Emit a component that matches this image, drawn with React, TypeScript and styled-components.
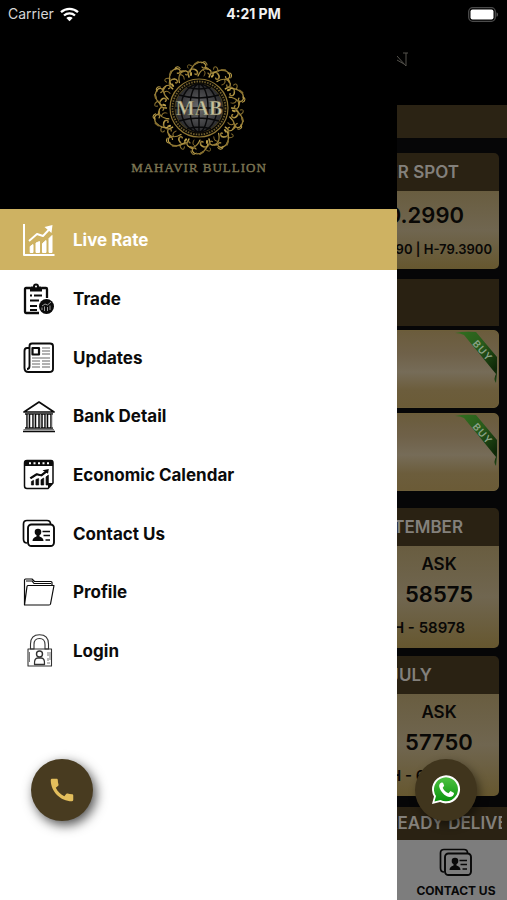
import React from "react";
import styled, { createGlobalStyle, css } from "styled-components";
import { MdCall } from "react-icons/md";

const GlobalStyle = createGlobalStyle`
  *, *::before, *::after { box-sizing: border-box; }
  body { margin: 0; background: #000; font-family: Inter, "Liberation Sans", sans-serif; }
  h1, h2, p, ul { margin: 0; padding: 0; }
  button { font: inherit; border: 0; padding: 0; cursor: pointer; }
  a { color: inherit; text-decoration: none; }
`;

const Screen = styled.div`
  position: relative;
  display: grid;
  grid-template-columns: minmax(0, 1fr) 110px;
  grid-template-rows: 28px 1fr;
  min-height: 100vh;
  background: #000;
`;

/* ---------- status bar ---------- */

const StatusBar = styled.header`
  grid-column: 1 / -1;
  display: grid;
  grid-template-columns: 1fr auto 1fr;
  align-items: center;
  padding: 0 8px;
  color: #f2f2f2;
  font-size: 14px;
  line-height: 28px;
`;

const Carrier = styled.span`
  display: flex;
  align-items: center;
  gap: 6px;
  color: #d6d6d6;
`;

const Clock = styled.time`
  font-weight: 700;
`;

const BatterySlot = styled.span`
  display: flex;
  justify-content: flex-end;
`;

/* ---------- drawer ---------- */

const Drawer = styled.aside`
  display: flex;
  flex-direction: column;
  background: #fff;
`;

const Brand = styled.div`
  display: flex;
  justify-content: center;
  height: 181px;
  padding-top: 30px;
  background: #000;
`;

const Menu = styled.ul`
  display: grid;
  grid-template-rows: 61px;
  grid-auto-rows: 1fr;
  min-height: 471px;
  list-style: none;
`;

const MenuLink = styled.a<{ $active?: boolean }>`
  display: flex;
  align-items: center;
  gap: 18px;
  height: 100%;
  padding-left: 22px;
  color: #0b0b0b;
  font-size: 17px;
  font-weight: 700;
  ${(p) =>
    p.$active &&
    css`
      background: #ceb262;
      color: #fff;
    `}
`;

const FloatingButton = styled.button<{ $side: "left" | "right" }>`
  position: absolute;
  bottom: 79px;
  ${(p) => (p.$side === "left" ? "left: 31px;" : "right: 30px;")}
  display: flex;
  align-items: center;
  justify-content: center;
  width: 62px;
  height: 62px;
  border-radius: 50%;
  ${(p) =>
    p.$side === "left"
      ? css`
          background: #483b20;
          color: #e3be5c;
          box-shadow: 3px 4px 12px rgba(0, 0, 0, 0.7);
        `
      : css`
          background: #40351d;
          color: #fff;
          box-shadow: 3px 4px 10px rgba(0, 0, 0, 0.45);
        `}
`;

/* ---------- dimmed rates page ---------- */

const Rates = styled.main`
  display: flex;
  flex-direction: column;
  align-items: flex-end;
  min-width: 0;
  overflow: hidden;
  background: #060607;
`;

const TitleBar = styled.div`
  align-self: stretch;
  height: 77px;
  padding-top: 21px;
  background: #000;
`;

const NewsStrip = styled.div`
  align-self: stretch;
  height: 33px;
  margin-bottom: 15px;
  background: #2b2314;
`;

const SectionBar = styled.div`
  align-self: stretch;
  height: 47px;
  margin: 10px 8px 4px 0;
  background: #292112;
`;

const Card = styled.section<{ $gap: number }>`
  width: 186px;
  margin: 0 8px ${(p) => p.$gap}px 0;
  border-radius: 5px;
  overflow: hidden;
  color: #090806;
`;

const CardTitle = styled.h2<{ $inset: number }>`
  padding-right: ${(p) => p.$inset}px;
  text-align: right;
  background: #2a2213;
  color: #83807b;
  font-size: 17px;
  font-weight: 600;
  line-height: 38px;
  white-space: nowrap;
`;

const SpotBody = styled.div`
  height: 78px;
  padding-top: 8px;
  background: linear-gradient(#695d40, #706650 50%, #66572f);
  text-align: right;
`;

const SpotPrice = styled.p`
  padding-right: 35px;
  font-size: 22px;
  font-weight: 600;
  line-height: 32px;
`;

const SpotRange = styled.p`
  padding: 8px 7px 0 0;
  font-size: 13px;
  font-weight: 600;
  line-height: 20px;
  white-space: nowrap;
`;

const RateBody = styled.div`
  display: flex;
  flex-direction: column;
  align-items: center;
  height: 102px;
  padding: 6px 0 0 66px;
  background: linear-gradient(#695d40, #706650 50%, #66572f);
`;

const RateLabel = styled.p`
  font-size: 17px;
  font-weight: 600;
  line-height: 24px;
`;

const RateValue = styled.p`
  font-size: 22px;
  font-weight: 600;
  line-height: 36px;
`;

const RateHigh = styled.p`
  align-self: flex-end;
  padding-right: 34px;
  font-size: 15px;
  font-weight: 600;
  line-height: 32px;
`;

const OfferCard = styled.section<{ $gap: number }>`
  display: flex;
  justify-content: flex-end;
  width: 186px;
  height: 78px;
  margin: 0 8px ${(p) => p.$gap}px 0;
  border: 1px solid #6d5e39;
  border-radius: 5px;
  overflow: hidden;
  background: linear-gradient(#6b5c3c, #6f6149 30%, #766c58 54%, #6c5d3c 78%, #6b5b37);
`;

const DeliveryStrip = styled.div`
  align-self: stretch;
  height: 33px;
  padding-right: 5px;
  background: #2a2213;
`;

const DeliveryText = styled.p`
  display: flex;
  justify-content: center;
  padding-left: 18px;
  overflow: hidden;
  color: #83807b;
  font-size: 17px;
  font-weight: 600;
  line-height: 33px;
  white-space: nowrap;
`;

const TabBar = styled.nav`
  align-self: stretch;
  flex: 1;
  display: flex;
  justify-content: center;
  background: #7d7d7d;
`;

const Tab = styled.a`
  display: flex;
  flex-direction: column;
  align-items: center;
  gap: 3px;
  padding: 6px 0 0 8px;
  color: #080808;
  font-size: 12px;
  font-weight: 700;
  line-height: 18px;
`;

/* ---------- drawings ---------- */

const WifiIcon = () => (
  <svg width="19" height="15" viewBox="0 0 19 15" fill="none" stroke="#fff" strokeWidth="2.3" aria-hidden>
    <path d="M1 5.2C5.8.7 13.2.7 18 5.2" />
    <path d="M4 8.5C7.2 5.6 11.8 5.6 15 8.5" />
    <path d="M9.5 14.3 6.3 11C8.2 9.4 10.8 9.4 12.7 11Z" fill="#fff" stroke="none" />
  </svg>
);

const BatteryIcon = () => (
  <svg width="31" height="15" viewBox="0 0 31 15" aria-hidden>
    <rect x="0.7" y="0.7" width="26.6" height="13.6" rx="4" fill="none" stroke="#4b4b4b" strokeWidth="1.3" />
    <rect x="2.5" y="2.5" width="23" height="10" rx="2" fill="#fff" />
    <path d="M28.5 5.2c2 .8 2 3.8 0 4.6z" fill="#555" />
  </svg>
);

const Flourish = () => (
  <g fill="none" stroke="url(#gold)" strokeLinecap="round">
    <path strokeWidth="1.5" d="M-10-31C-12-37-8-41-3-38C0-36-2-32-4-34" />
    <path strokeWidth="1.3" d="M-9-36C-7-43-1-48 5-45C9-42 5-38 3-41" />
    <path strokeWidth="1.2" d="M-1-32C2-39 7-41 11-38C14-35 10-32 9-35" />
    <path strokeWidth="1" d="M-6-41C-10-45-13-43-11-40M3-45C5-48 8-46 8-43M5-32C7-35 6-37 4-38" />
    <path strokeWidth="2" d="M-4-44L-1-46M7-40L9-39M-8-33L-8-35" />
  </g>
);

const BrandLogo = () => (
  <svg width="146" height="122" viewBox="0 0 146 122" role="img" aria-label="Mahavir Bullion">
    <defs>
      <linearGradient id="gold" x1="0" y1="0" x2="1" y2="1">
        <stop offset="0" stopColor="#5b481a" />
        <stop offset="0.5" stopColor="#c2a54c" />
        <stop offset="1" stopColor="#725720" />
      </linearGradient>
      <radialGradient id="globe">
        <stop offset="0" stopColor="#6b6b6e" />
        <stop offset="1" stopColor="#2b2b2d" />
      </radialGradient>
    </defs>
    <g transform="translate(73 50)">
      {Array.from({ length: 10 }, (_, i) => (
        <g key={i} transform={`rotate(${i * 36})`}>
          <Flourish />
        </g>
      ))}
      <circle r="29" fill="#080704" stroke="#8f7633" strokeWidth="1.2" />
      <circle r="26.5" fill="none" stroke="#6f5d2c" strokeWidth="1.8" strokeDasharray="1.5 1.2" />
      <circle r="24" fill="url(#globe)" stroke="#4d421f" />
      <g fill="none" stroke="#09090a" strokeWidth="1.4">
        <path d="M0-24V24M-24 0H24M-20-13Q0-7 20-13M-20 13Q0 7 20 13M-12-21Q0-17 12-21M-12 21Q0 17 12 21" />
        <ellipse rx="9" ry="24" />
        <ellipse rx="18" ry="24" />
      </g>
      <text y="7" textAnchor="middle" fontFamily="Liberation Serif, serif" fontWeight="700" fontSize="20" fill="#c6c09c" stroke="#474635" strokeWidth="0.4">
        MAB
      </text>
    </g>
    <text x="73" y="114" textAnchor="middle" fontFamily="Liberation Serif, serif" fontSize="13" letterSpacing="1" fill="#7d7653" stroke="#7d7653" strokeWidth="0.4">
      MAHAVIR BULLION
    </text>
  </svg>
);

const IconFrame = ({ children }: { children: React.ReactNode }) => (
  <svg width="33" height="33" viewBox="0 0 33 33" fill="none" stroke="currentColor" strokeWidth="1.5" strokeLinejoin="round" aria-hidden>
    {children}
  </svg>
);

const ChartMarks = () => (
  <>
    <path d="M8.2 31V25L11 23V31ZM14 31V21.5L17.5 20V31ZM20.5 31V22L24 19V31ZM27 31V17L30 14V31Z" fill="currentColor" strokeWidth="1" />
    <path d="M7 19.5L15 12.5L21 14.5L28 7" strokeWidth="1.9" />
    <path d="M22.5 5.5L30.5 3.5L29.5 11.5Z" fill="currentColor" stroke="none" />
  </>
);

const LiveRateIcon = () => (
  <IconFrame>
    <path d="M2 1V32H32.5" strokeWidth="2" />
    <g transform="translate(0 -1.5)">
      <ChartMarks />
    </g>
  </IconFrame>
);

const TradeIcon = () => (
  <IconFrame>
    <path d="M8 5H4Q3 5 3 6V29Q3 30 4 30H17M20 5H24Q25 5 25 6V15" strokeWidth="2.3" />
    <path d="M8 8.5V4.5Q8 3.5 9.5 3.5H11Q11 .5 14 .5T17 3.5H18.5Q20 3.5 20 4.5V8.5Z" fill="currentColor" stroke="none" />
    <circle cx="14" cy="3.5" r="1" fill="#fff" stroke="none" />
    <path d="M8 12.5H10M12 12.5H20M8 17.5H17M8 23H15M8 27H15" strokeWidth="1.9" />
    <circle cx="24.5" cy="23.5" r="7.5" fill="currentColor" stroke="none" />
    <path d="M20 27V24.5M22.5 28V23.5M25.5 28V24M28 27V22.5M20 23L23 21L25.5 22L29 19" stroke="#aaa" strokeWidth="0.9" />
  </IconFrame>
);

const NewsIcon = () => (
  <IconFrame>
    <path d="M7.5 7H5Q2.5 7 2.5 10V27Q2.5 31 6.5 31H27Q31 31 31 28V5Q31 2.5 28 2.5H10Q7.5 2.5 7.5 5V25Q7.5 28 5 28" strokeWidth="1.9" />
    <rect x="10.5" y="7" width="6.5" height="6.5" strokeWidth="2.2" />
    <path d="M20 7H28M20 10H28M20 13H28M10 17H28M10 20H18M20 20H28M10 23H18M20 23H28M10 26H18M20 26H28" strokeWidth="1.2" stroke="#666" />
  </IconFrame>
);

const BankIcon = () => (
  <IconFrame>
    <path d="M2 12L17 2L32 12ZM3 14H31M3 28H31M1 31.5H33" strokeWidth="1.7" />
    <path d="M1.5 29.7H32" stroke="#777" />
    <path d="M5 14V28M7.5 14V28M11 14V28M13.5 14V28M17 14V28M20 14V28M23 14V28M25.5 14V28M29 14V28" strokeWidth="1.5" />
    <path d="M6.2 14V28M12.2 14V28M18.5 14V28M24.2 14V28M30 14V28" stroke="#999" strokeWidth="0.8" />
  </IconFrame>
);

const CalendarIcon = () => (
  <IconFrame>
    <path d="M5 2.5H29Q31 2.5 31 5V25L26 30.5H5Q2.5 30.5 2.5 28V5Q2.5 2.5 5 2.5Z" />
    <path d="M2.5 8V5Q2.5 2 5 2H29Q31 2 31 5V8ZM31 25H26V30.5Z" fill="currentColor" stroke="none" />
    <path d="M7 5.2H28" stroke="#fff" strokeWidth="2" strokeDasharray="2 2.5" />
    <g transform="translate(3 9) scale(.78 .58)" strokeWidth="2.5">
      <ChartMarks />
      <path d="M7 19.5L15 12.5L21 14.5L28 7" strokeWidth="3.4" />
    </g>
  </IconFrame>
);

const ContactIcon = () => (
  <IconFrame>
    <path d="M5 26Q1.5 26 1.5 22V7Q1.5 3.5 5 3.5H25Q28.5 3.5 28.5 7" strokeWidth="1.7" />
    <rect x="6" y="7.5" width="26" height="21.5" rx="3.5" strokeWidth="1.9" />
    <circle cx="16" cy="15" r="3.3" fill="currentColor" stroke="none" />
    <path d="M10.5 24Q10.5 20.5 14.5 19.5V17H17.5V19.5Q21.5 20.5 21.5 24Z" fill="currentColor" stroke="none" />
    <path d="M20.5 14.5H28M21.5 18.5H28M23.5 23H28" strokeWidth="1.7" />
  </IconFrame>
);

const FolderIcon = () => (
  <IconFrame>
    <path d="M2.5 29V4Q2.5 3 3.5 3H10L12.5 5.5H29Q30 5.5 30 6.5V10M2.5 29L5 10.5Q5.2 9.5 6.2 9.5H32L28.5 28Q28.3 29 27 29ZM4 5H10L12 7.5H29" strokeWidth="1.2" />
  </IconFrame>
);

const LockIcon = () => (
  <IconFrame>
    <g strokeWidth="1.1" stroke="#333">
      <path d="M8.5 15V10Q8.5.8 17.5.8T26.5 10V15H23V10.5Q23 4.5 17.5 4.5T12 10.5V15Z" />
      <rect x="6" y="15" width="23.5" height="17" />
      <circle cx="17.5" cy="20" r="3" strokeWidth="1.4" />
      <path d="M12.5 30.5Q12 24 16 24H19Q23 24 22.5 30.5Z" strokeWidth="1.3" />
      <path d="M7.5 18V28M26 18V22M26 24V27M28 18V26M25 29H28" strokeWidth="1" stroke="#777" />
    </g>
  </IconFrame>
);

const WhatsAppIcon = () => (
  <svg width="30" height="30" viewBox="0 0 30 30" aria-hidden>
    <defs>
      <linearGradient id="chat" x1="0" y1="0" x2="0" y2="1">
        <stop offset="0" stopColor="#4ec242" />
        <stop offset="1" stopColor="#09930c" />
      </linearGradient>
    </defs>
    <path d="M1 29L3 21.5A14 14 0 1 1 9 27Z" fill="#fff" />
    <path d="M3.5 26.5L5 21A12 12 0 1 1 9.5 25Z" fill="url(#chat)" />
    <path d="M10.5 7.5C8 8.5 7.5 11 9 14C11.5 19 15 21.5 18.5 22C21 22 23 20.5 23 18L19.5 16L17.5 18.3C14.5 17 12.8 15.2 11.7 12.7L13.2 10.8L12 7.7Z" fill="#fff" />
  </svg>
);

const BuyRibbon = () => (
  <svg width="44" height="54" viewBox="0 0 44 54" role="img" aria-label="Buy">
    <defs>
      <linearGradient id="ribbon" x1="0" y1="0" x2="1" y2="1">
        <stop offset="0" stopColor="#32701f" />
        <stop offset="0.45" stopColor="#285a1b" />
        <stop offset="0.85" stopColor="#0e2607" />
        <stop offset="1" stopColor="#244e18" />
      </linearGradient>
    </defs>
    <path d="M1 2Q10 0 22 1L43 26V42L42 52Q39 48 42 43L10 4Q6 2 1 2Z" fill="url(#ribbon)" />
    <text transform="translate(18 13) rotate(49)" fontFamily="Inter, sans-serif" fontWeight="600" fontSize="10" letterSpacing="1" fill="#8ba286">
      BUY
    </text>
  </svg>
);

const TitleLetter = () => (
  <svg width="14" height="20" viewBox="0 0 14 20" fill="none" stroke="#55534d" aria-hidden>
    <path d="M0 7L9 17V4M6 4H11M0 11L7 15" />
  </svg>
);

const menu = [
  { label: "Live Rate", Icon: LiveRateIcon, active: true },
  { label: "Trade", Icon: TradeIcon },
  { label: "Updates", Icon: NewsIcon },
  { label: "Bank Detail", Icon: BankIcon },
  { label: "Economic Calendar", Icon: CalendarIcon },
  { label: "Contact Us", Icon: ContactIcon },
  { label: "Profile", Icon: FolderIcon },
  { label: "Login", Icon: LockIcon },
];

const contracts = [
  { title: "SEPTEMBER", inset: 36, ask: "58575", high: "H - 58978", gap: 8 },
  { title: "JULY", inset: 67, ask: "57750", high: "H - 60000", gap: 11 },
];

export default function App() {
  return (
    <>
      <GlobalStyle />
      <Screen>
        <StatusBar>
          <Carrier>
            Carrier <WifiIcon />
          </Carrier>
          <Clock>4:21 PM</Clock>
          <BatterySlot>
            <BatteryIcon />
          </BatterySlot>
        </StatusBar>

        <Drawer>
          <Brand>
            <BrandLogo />
          </Brand>
          <nav aria-label="Main menu">
            <Menu>
              {menu.map(({ label, Icon, active }) => (
                <li key={label}>
                  <MenuLink href="#" $active={active} aria-current={active ? "page" : undefined}>
                    <Icon />
                    {label}
                  </MenuLink>
                </li>
              ))}
            </Menu>
          </nav>
        </Drawer>

        <Rates>
          <TitleBar>
            <TitleLetter />
          </TitleBar>
          <NewsStrip />
          <Card $gap={0}>
            <CardTitle $inset={40}>SILVER SPOT</CardTitle>
            <SpotBody>
              <SpotPrice>80.2990</SpotPrice>
              <SpotRange>L-77.0990 | H-79.3900</SpotRange>
            </SpotBody>
          </Card>
          <SectionBar />
          <OfferCard $gap={5}>
            <BuyRibbon />
          </OfferCard>
          <OfferCard $gap={17}>
            <BuyRibbon />
          </OfferCard>
          {contracts.map((c) => (
            <Card key={c.title} $gap={c.gap}>
              <CardTitle $inset={c.inset}>{c.title}</CardTitle>
              <RateBody>
                <RateLabel>ASK</RateLabel>
                <RateValue>{c.ask}</RateValue>
                <RateHigh>{c.high}</RateHigh>
              </RateBody>
            </Card>
          ))}
          <DeliveryStrip>
            <DeliveryText>READY DELIVERY</DeliveryText>
          </DeliveryStrip>
          <TabBar>
            <Tab href="#">
              <ContactIcon />
              CONTACT US
            </Tab>
          </TabBar>
        </Rates>

        <FloatingButton $side="left" aria-label="Call">
          <MdCall size={30} />
        </FloatingButton>
        <FloatingButton $side="right" aria-label="WhatsApp">
          <WhatsAppIcon />
        </FloatingButton>
      </Screen>
    </>
  );
}
